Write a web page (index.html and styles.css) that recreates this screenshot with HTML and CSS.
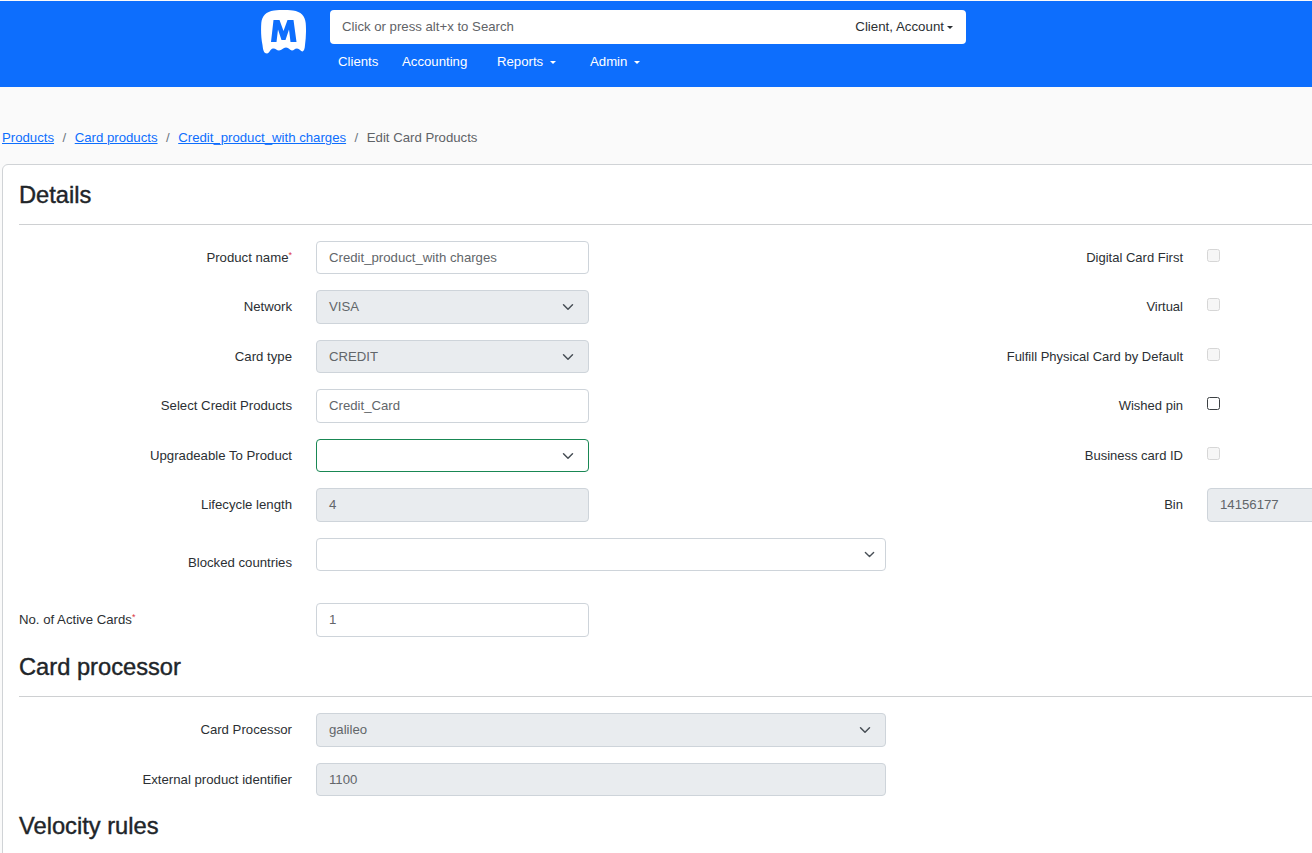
FILE: index.html
```html
<!DOCTYPE html>
<html lang="en">
<head>
<meta charset="utf-8">
<title>Edit Card Products</title>
<link rel="stylesheet" href="styles.css">
</head>
<body>
<header class="topbar">
  <svg class="logo" viewBox="0 0 45 44" aria-hidden="true">
    <path fill="#fff" d="M13 0.500C18 -0.300 27 -0.300 32 0.500C40 1.500 44 6 44.700 13C45.300 20 45 28 44 35C43.800 38.500 43 41 41.500 41.500C39.800 41.500 38.500 38.500 36 38.500C33.500 38.500 33 40.500 31 40.500C29 40.500 28 37.500 25 37.500C22 37.500 21 40.500 18 40.500C15.500 40.500 14.500 38 12 38.500C9 39 8.500 43.500 6 43.500C3 43.500 2 40 1.500 35C0 28 -0.200 20 0.300 13C1 6 5 1.500 13 0.500Z"/>
    <path fill="#0d6efd" d="M10 32L12.500 10H18.500L22.500 21L26.500 10H32.500L35.500 32H29.500L28 19.500L24.500 30H20.500L17 19.500L15.500 32Z"/>
  </svg>
  <div class="topbar-main">
    <div class="search">
      <span class="search-hint">Click or press alt+x to Search</span>
      <span class="search-scope">Client, Account<i class="caret caret-dark"></i></span>
    </div>
    <nav class="mainnav">
      <a class="nav-clients">Clients</a>
      <a class="nav-accounting">Accounting</a>
      <a class="nav-reports">Reports<i class="caret"></i></a>
      <a class="nav-admin">Admin<i class="caret"></i></a>
    </nav>
  </div>
</header>
<ol class="breadcrumb">
  <li><a href="#">Products</a></li>
  <li class="sep">/</li>
  <li><a href="#">Card products</a></li>
  <li class="sep">/</li>
  <li><a href="#">Credit_product_with charges</a></li>
  <li class="sep">/</li>
  <li class="current">Edit Card Products</li>
</ol>
<main class="card">
  <h2 class="section-title">Details</h2>
  <div class="form-grid">
    <label class="lbl">Product name<sup class="req">*</sup></label>
    <input class="ctl" type="text" value="Credit_product_with charges">
    <label class="lbl col4">Digital Card First</label>
    <span class="chk-cell"><input class="chk" type="checkbox" disabled></span>

    <label class="lbl">Network</label>
    <div class="ctl ctl-off ctl-sel">VISA</div>
    <label class="lbl col4">Virtual</label>
    <span class="chk-cell"><input class="chk" type="checkbox" disabled></span>

    <label class="lbl">Card type</label>
    <div class="ctl ctl-off ctl-sel">CREDIT</div>
    <label class="lbl col4">Fulfill Physical Card by Default</label>
    <span class="chk-cell"><input class="chk" type="checkbox" disabled></span>

    <label class="lbl">Select Credit Products</label>
    <input class="ctl" type="text" value="Credit_Card">
    <label class="lbl col4">Wished pin</label>
    <span class="chk-cell"><input class="chk" type="checkbox"></span>

    <label class="lbl">Upgradeable To Product</label>
    <div class="ctl ctl-sel ctl-focus"></div>
    <label class="lbl col4">Business card ID</label>
    <span class="chk-cell"><input class="chk" type="checkbox" disabled></span>

    <label class="lbl">Lifecycle length</label>
    <div class="ctl ctl-off">4</div>
    <label class="lbl col4">Bin</label>
    <div class="ctl ctl-off">14156177</div>

    <label class="lbl lbl-low">Blocked countries</label>
    <div class="ctl ctl-sel ctl-sel-sm ctl-wide"></div>
  </div>
  <div class="form-grid form-grid-gap">
    <label class="lbl lbl-left">No. of Active Cards<sup class="req">*</sup></label>
    <input class="ctl" type="text" value="1">
  </div>
  <h2 class="section-title section-second">Card processor</h2>
  <div class="form-grid">
    <label class="lbl">Card Processor</label>
    <div class="ctl ctl-off ctl-sel ctl-wide">galileo</div>
    <label class="lbl">External product identifier</label>
    <div class="ctl ctl-off ctl-wide">1100</div>
  </div>
  <h2 class="section-title section-third">Velocity rules</h2>
</main>
</body>
</html>
```
FILE: styles.css
```css
* { box-sizing: border-box; }
html, body { height: 853px; overflow: hidden; }
body {
  margin: 0;
  background: #fafafa;
  color: #2b2f33;
  font-family: "Liberation Sans", Arial, sans-serif;
  font-size: 13.200px;
  line-height: 1.5;
}
.topbar {
  margin-top: 1px;
  height: 86px;
  background: #0d6efd;
  display: flex;
  align-items: flex-start;
  padding: 9px 0 0 261px;
}
.logo { width: 45px; height: 44px; flex: none; }
.topbar-main { margin-left: 24px; width: 636px; }
.search {
  height: 34px;
  background: #fff;
  border-radius: 4px;
  display: flex;
  align-items: center;
  justify-content: space-between;
  padding: 0 13px 0 12px;
}
.search-hint { color: #5f6367; }
.search-scope { color: #2b2f33; font-size: 13.300px; }
.caret {
  display: inline-block;
  margin-left: 7px;
  vertical-align: 2px;
  border-top: 3.500px solid #fff;
  border-left: 3.500px solid transparent;
  border-right: 3.500px solid transparent;
}
.caret-dark { border-top-color: #2b2f33; margin-left: 3px; }
.mainnav { display: flex; color: #fff; padding: 8px 0 0 8px; }
.nav-clients { width: 64px; }
.nav-accounting { width: 95px; }
.nav-reports { width: 93px; }
.breadcrumb {
  list-style: none;
  margin: 0;
  padding: 41px 0 0 2px;
  display: flex;
  height: 77px;
}
.breadcrumb a { color: #0d6efd; text-decoration: underline; }
.sep { color: #6c757d; padding: 0 8.500px; }
.current { color: #5f6367; }
.card {
  margin-left: 2px;
  width: 1500px;
  height: 720px;
  background: #fff;
  border: 1px solid #d0d3d6;
  border-radius: 6px;
  padding: 16px;
}
.section-title {
  margin: 0 0 16px;
  height: 43.750px;
  padding-bottom: 14px;
  font-size: 23.700px;
  font-weight: 400;
  line-height: 29px;
  border-bottom: 1px solid #ced0d2;
  color: #212529;
  -webkit-text-stroke: 0.400px #212529;
}
.section-second { margin: 16.500px 0 16.250px; }
.section-third { margin-top: 16px; border-bottom: 0; }
.form-grid {
  display: grid;
  grid-template-columns: repeat(6, 273px);
  column-gap: 24px;
  row-gap: 16px;
  grid-auto-rows: 33.500px;
  width: 1758px;
}
.form-grid-gap { margin-top: 32px; }
.lbl {
  grid-column: 1;
  text-align: right;
  align-self: center;
}
.col4 { grid-column: 4; font-size: 13px; }
.lbl-left { text-align: left; }
.lbl-low { transform: translateY(8px); }
.req { color: #dc3545; font-size: 9px; line-height: 0; vertical-align: 4px; }
.ctl {
  grid-column: 2;
  display: block;
  width: 100%;
  height: 33.500px;
  padding: 0 12px;
  margin: 0;
  background: #fff;
  border: 1px solid #ced4da;
  border-radius: 4px;
  font: inherit;
  line-height: 31.500px;
  color: #62666a;
  outline: none;
}
input.ctl { padding-bottom: 1px; }
.col4 + .ctl { grid-column: 5; }
.chk-cell { grid-column: 5; padding-top: 8px; line-height: 0; }
.ctl-off { background-color: #e9ecef; }
.ctl-sel {
  background-repeat: no-repeat;
  background-position: right 14px center;
  background-size: 12px 12px;
  background-image: url("data:image/svg+xml,%3csvg xmlns='http://www.w3.org/2000/svg' viewBox='0 0 16 16'%3e%3cpath fill='none' stroke='%23495057' stroke-linecap='round' stroke-linejoin='round' stroke-width='2' d='m2 5 6 6 6-6'/%3e%3c/svg%3e");
}
.ctl-sel-sm { background-size: 11px 11px; background-position: right 10px center; }
.ctl-focus { border-color: #198754; }
.ctl-wide { grid-column: 2 / span 2; }
.chk {
  appearance: none;
  -webkit-appearance: none;
  width: 13px;
  height: 13px;
  display: block;
  margin: 0;
  background: #fff;
  border: 1px solid #3c4043;
  border-radius: 2.500px;
}
.chk:disabled { background: #f6f6f6; border-color: #d6d6d6; }
```
